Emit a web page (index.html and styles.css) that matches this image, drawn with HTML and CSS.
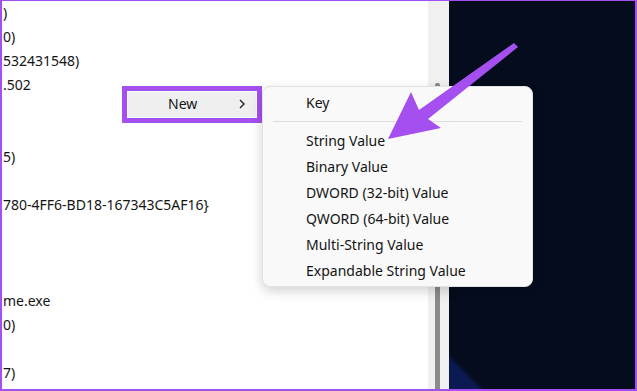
FILE: index.html
```html
<!DOCTYPE html>
<html>
<head>
<meta charset="utf-8">
<link rel="stylesheet" href="styles.css">
</head>
<body>
<div class="frame">
  <div class="panel">
    <div class="line">)</div>
    <div class="line">0)</div>
    <div class="line">532431548)</div>
    <div class="line">.502</div>
    <div class="line"></div>
    <div class="line"></div>
    <div class="line">5)</div>
    <div class="line"></div>
    <div class="line">780-4FF6-BD18-167343C5AF16}</div>
    <div class="line"></div>
    <div class="line"></div>
    <div class="line"></div>
    <div class="line">me.exe</div>
    <div class="line">0)</div>
    <div class="line"></div>
    <div class="line">7)</div>
  </div>
  <div class="scroll"><div class="thumb"></div></div>
  <div class="desk"></div>

  <div class="newbox">
    <div class="newinner">
      <span class="newlabel">New</span>
      <svg class="chev" width="6" height="10" viewBox="0 0 6 10"><path d="M1 1 L5 5 L1 9" fill="none" stroke="#222" stroke-width="1.4"/></svg>
    </div>
  </div>

  <div class="menu">
    <div class="item">Key</div>
    <div class="sep"></div>
    <div class="item">String Value</div>
    <div class="item">Binary Value</div>
    <div class="item">DWORD (32-bit) Value</div>
    <div class="item">QWORD (64-bit) Value</div>
    <div class="item">Multi-String Value</div>
    <div class="item">Expandable String Value</div>
  </div>

  <svg class="arrow" width="637" height="391" viewBox="0 0 637 391">
    <polygon points="388,139 411,92 419,110 514,43 518,47 428,119 441,128" fill="#a54ff0"/>
  </svg>
</div>
</body>
</html>
```
FILE: styles.css
```css
html, body {
  margin: 0;
  padding: 0;
}
body {
  width: 637px;
  height: 391px;
  overflow: hidden;
  font-family: "Noto Sans", "Open Sans", sans-serif;
  font-size: 14px;
  color: #141414;
}
.frame {
  position: relative;
  width: 637px;
  height: 391px;
  box-sizing: border-box;
  border: 2px solid #a54ff0;
  border-top-width: 1px;
  display: flex;
  overflow: hidden;
}
.panel {
  flex: 0 0 425px;
  background: #ffffff;
  overflow: hidden;
  padding-left: 1px;
}
.line {
  height: 24px;
  line-height: 23px;
  white-space: nowrap;
}
.scroll {
  flex: 0 0 21px;
  background: #f0f0f0;
  position: relative;
}
.thumb {
  position: absolute;
  left: 7px;
  top: 82px;
  width: 5px;
  bottom: 0;
  background: #8b8b8b;
  border-radius: 2px 2px 0 0;
}
.desk {
  flex: 1;
  background:
    linear-gradient(45deg, #0b1a52 0, #0b1a52 20px, rgba(11,26,82,0) 26px) no-repeat 0 100% / 40px 40px,
    #040c1d;
}
.newbox {
  position: absolute;
  left: 120px;
  top: 85px;
  width: 140px;
  height: 37px;
  box-sizing: border-box;
  border: 5px solid #a54ff0;
  background: #ffffff;
  padding: 1px;
}
.newinner {
  height: 100%;
  background: #efefef;
  position: relative;
}
.newlabel {
  position: absolute;
  left: 40px;
  top: 1px;
  line-height: 22px;
}
.chev {
  position: absolute;
  left: 111px;
  top: 7px;
}
.menu {
  position: absolute;
  left: 260px;
  top: 85px;
  width: 271px;
  box-sizing: border-box;
  padding: 3px 0 2px;
  background: #f9f9f9;
  border: 1px solid #e2e2e2;
  border-radius: 8px;
  box-shadow: 0 4px 12px rgba(0, 0, 0, 0.18);
}
.item {
  height: 26px;
  line-height: 25px;
  padding-left: 43px;
  white-space: nowrap;
}
.sep {
  height: 1px;
  background: #dcdcdc;
  margin: 5px 10px 6px;
}
.arrow {
  position: absolute;
  left: -2px;
  top: -1px;
}
```
